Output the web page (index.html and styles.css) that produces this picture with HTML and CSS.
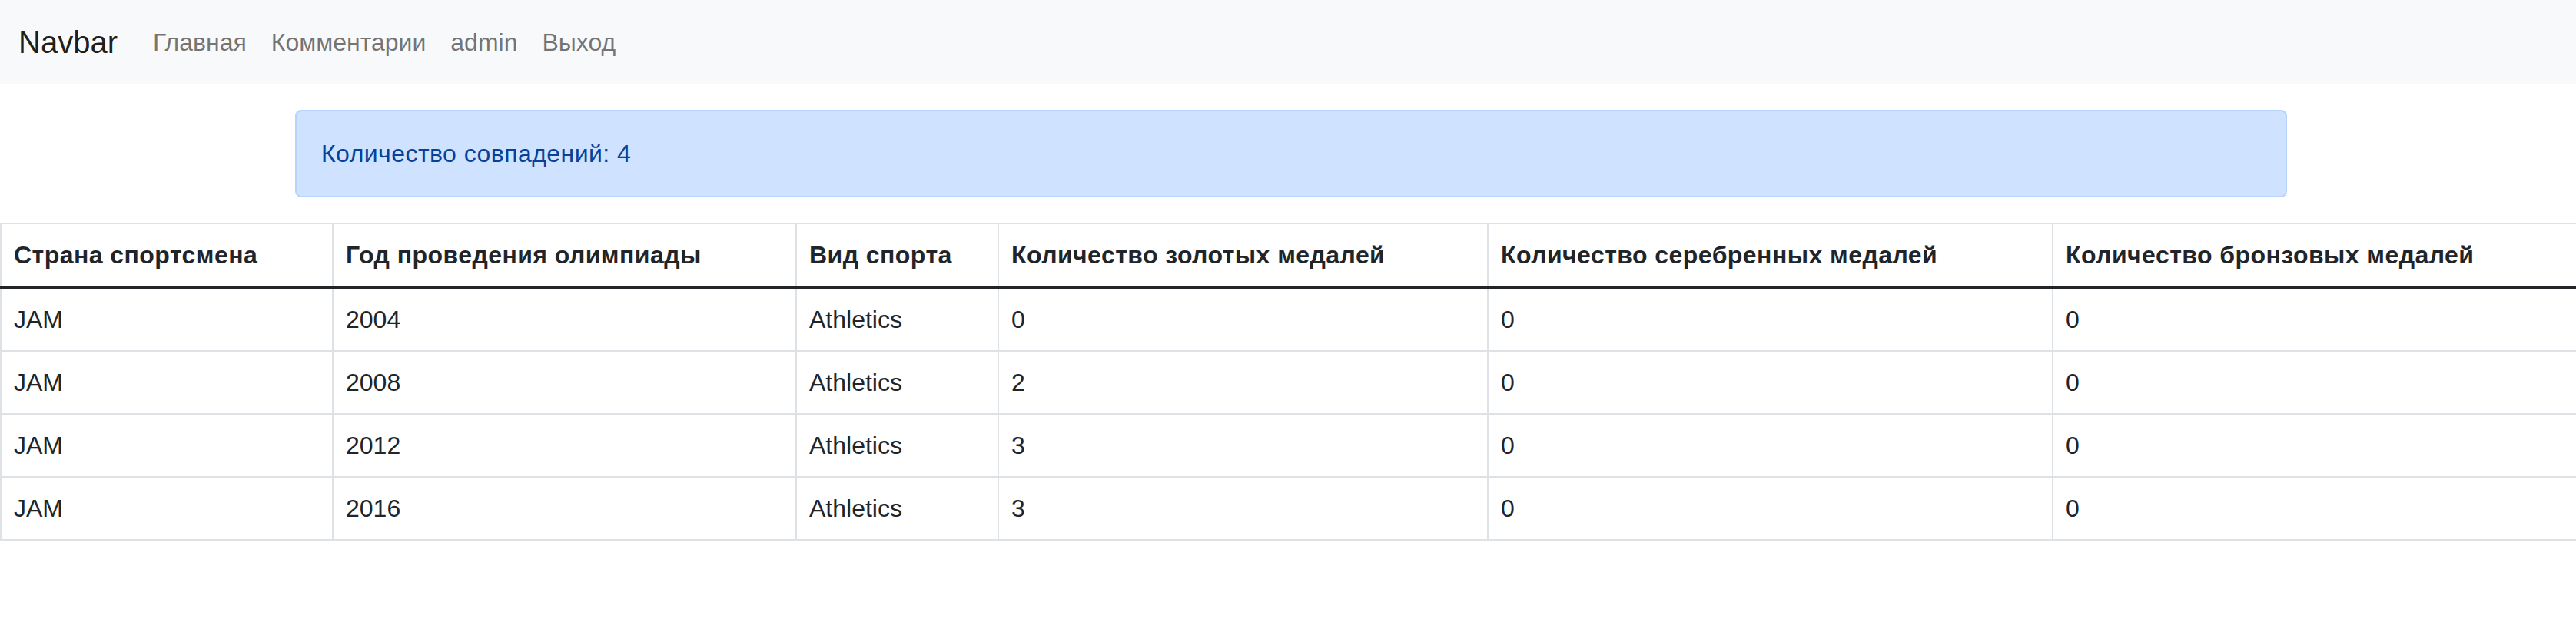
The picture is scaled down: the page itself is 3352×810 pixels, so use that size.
FILE: index.html
```html
<!DOCTYPE html>
<html lang="ru">
<head>
<meta charset="utf-8">
<title>Navbar</title>
<link rel="stylesheet" href="styles.css">
</head>
<body>
<div class="page">
  <nav class="navbar">
    <div class="navbar-inner">
      <a class="brand" href="#">Navbar</a>
      <ul class="nav">
        <li><a class="nav-link" href="#">Главная</a></li>
        <li><a class="nav-link" href="#">Комментарии</a></li>
        <li><a class="nav-link" href="#">admin</a></li>
        <li><a class="nav-link" href="#">Выход</a></li>
      </ul>
    </div>
  </nav>
  <div class="container">
    <div class="alert">Количество совпадений: 4</div>
  </div>
  <table class="table">
    <colgroup>
      <col class="c1"><col class="c2"><col class="c3"><col class="c4"><col class="c5"><col class="c6">
    </colgroup>
    <thead>
      <tr>
        <th>Страна спортсмена</th>
        <th>Год проведения олимпиады</th>
        <th>Вид спорта</th>
        <th>Количество золотых медалей</th>
        <th>Количество серебренных медалей</th>
        <th>Количество бронзовых медалей</th>
      </tr>
    </thead>
    <tbody>
      <tr><td>JAM</td><td>2004</td><td>Athletics</td><td>0</td><td>0</td><td>0</td></tr>
      <tr><td>JAM</td><td>2008</td><td>Athletics</td><td>2</td><td>0</td><td>0</td></tr>
      <tr><td>JAM</td><td>2012</td><td>Athletics</td><td>3</td><td>0</td><td>0</td></tr>
      <tr><td>JAM</td><td>2016</td><td>Athletics</td><td>3</td><td>0</td><td>0</td></tr>
    </tbody>
  </table>
</div>
</body>
</html>
```

FILE: styles.css
```css
html {
  overflow: hidden;
}
body {
  margin: 0;
  font-family: "Liberation Sans", Arial, sans-serif;
  font-size: 32px;
  line-height: 1.5;
  color: #212529;
  background: #fff;
}
.page {
  width: 3360px;
}
.navbar {
  background: #f8f9fa;
  padding: 15px 0;
}
.navbar-inner {
  display: flex;
  align-items: center;
  padding: 0 24px;
}
.brand {
  font-size: 40px;
  line-height: 60px;
  padding: 10px 0;
  margin-right: 30px;
  color: rgba(0, 0, 0, 0.9);
  text-decoration: none;
}
.nav {
  display: flex;
  list-style: none;
  margin: 0;
  padding: 0;
}
.nav-link {
  display: block;
  padding: 16px 16px;
  line-height: 48px;
  color: rgba(0, 0, 0, 0.55);
  text-decoration: none;
}
.container {
  width: 2640px;
  margin: 33px auto 33px;
  padding: 0 24px;
  box-sizing: border-box;
}
.alert {
  background: #cfe2ff;
  border: 2px solid #b6d4fe;
  border-radius: 8px;
  color: #084298;
  padding: 31px 32px;
  line-height: 48px;
  letter-spacing: 0.45px;
}
.table {
  width: 3360px;
  table-layout: fixed;
  border-collapse: collapse;
  color: #212529;
}
.c1 { width: 432px; }
.c2 { width: 603px; }
.c3 { width: 263px; }
.c4 { width: 637px; }
.c5 { width: 735px; }
.c6 { width: 690px; }
.table th,
.table td {
  border: 2px solid #dee2e6;
  padding: 16px 16px;
  line-height: 48px;
  text-align: left;
  vertical-align: top;
}
.table th {
  font-weight: 700;
  letter-spacing: 0.45px;
}
.table thead th {
  border-bottom: 4px solid #212529;
}
```
